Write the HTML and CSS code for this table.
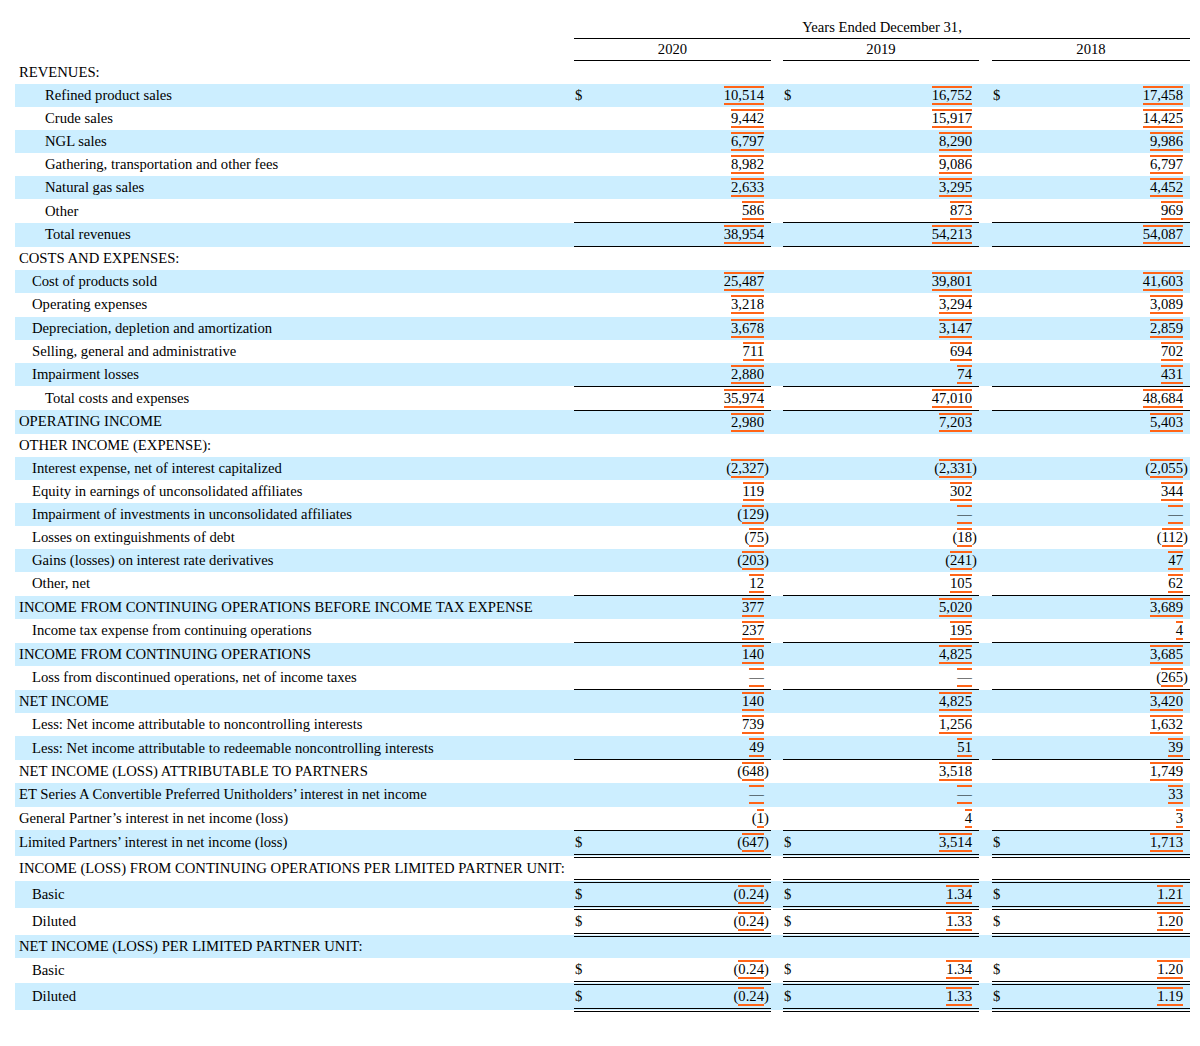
FILE: index.html
```html
<!DOCTYPE html>
<html>
<head>
<meta charset="utf-8">
<link rel="stylesheet" href="styles.css">
</head>
<body>
<div class="page">
<table class="stmt">
<colgroup><col class="c-label"><col class="c-v1"><col class="c-g1"><col class="c-v2"><col class="c-g2"><col class="c-v3"></colgroup>
<tr class="hd"><td></td><td colspan="5" class="hcap">Years Ended December 31,</td></tr>
<tr class="hd hd2"><td></td><td class="hy">2020</td><td></td><td class="hy">2019</td><td></td><td class="hy">2018</td></tr>

<tr><td class="l">REVENUES:</td><td></td><td></td><td></td><td></td><td></td></tr>
<tr class="b"><td class="l i2">Refined product sales</td><td class="v"><div class="cell"><span class="cur">$</span><span class="m">10,514</span></div></td><td></td><td class="v"><div class="cell"><span class="cur">$</span><span class="m">16,752</span></div></td><td></td><td class="v"><div class="cell"><span class="cur">$</span><span class="m">17,458</span></div></td></tr>
<tr><td class="l i2">Crude sales</td><td class="v"><div class="cell"><span class="m">9,442</span></div></td><td></td><td class="v"><div class="cell"><span class="m">15,917</span></div></td><td></td><td class="v"><div class="cell"><span class="m">14,425</span></div></td></tr>
<tr class="b"><td class="l i2">NGL sales</td><td class="v"><div class="cell"><span class="m">6,797</span></div></td><td></td><td class="v"><div class="cell"><span class="m">8,290</span></div></td><td></td><td class="v"><div class="cell"><span class="m">9,986</span></div></td></tr>
<tr><td class="l i2">Gathering, transportation and other fees</td><td class="v"><div class="cell"><span class="m">8,982</span></div></td><td></td><td class="v"><div class="cell"><span class="m">9,086</span></div></td><td></td><td class="v"><div class="cell"><span class="m">6,797</span></div></td></tr>
<tr class="b"><td class="l i2">Natural gas sales</td><td class="v"><div class="cell"><span class="m">2,633</span></div></td><td></td><td class="v"><div class="cell"><span class="m">3,295</span></div></td><td></td><td class="v"><div class="cell"><span class="m">4,452</span></div></td></tr>
<tr><td class="l i2">Other</td><td class="v"><div class="cell"><span class="m">586</span></div></td><td></td><td class="v"><div class="cell"><span class="m">873</span></div></td><td></td><td class="v"><div class="cell"><span class="m">969</span></div></td></tr>
<tr class="b t u"><td class="l i2">Total revenues</td><td class="v"><div class="cell"><span class="m">38,954</span></div></td><td></td><td class="v"><div class="cell"><span class="m">54,213</span></div></td><td></td><td class="v"><div class="cell"><span class="m">54,087</span></div></td></tr>

<tr><td class="l">COSTS AND EXPENSES:</td><td></td><td></td><td></td><td></td><td></td></tr>
<tr class="b"><td class="l i1">Cost of products sold</td><td class="v"><div class="cell"><span class="m">25,487</span></div></td><td></td><td class="v"><div class="cell"><span class="m">39,801</span></div></td><td></td><td class="v"><div class="cell"><span class="m">41,603</span></div></td></tr>
<tr><td class="l i1">Operating expenses</td><td class="v"><div class="cell"><span class="m">3,218</span></div></td><td></td><td class="v"><div class="cell"><span class="m">3,294</span></div></td><td></td><td class="v"><div class="cell"><span class="m">3,089</span></div></td></tr>
<tr class="b"><td class="l i1">Depreciation, depletion and amortization</td><td class="v"><div class="cell"><span class="m">3,678</span></div></td><td></td><td class="v"><div class="cell"><span class="m">3,147</span></div></td><td></td><td class="v"><div class="cell"><span class="m">2,859</span></div></td></tr>
<tr><td class="l i1">Selling, general and administrative</td><td class="v"><div class="cell"><span class="m">711</span></div></td><td></td><td class="v"><div class="cell"><span class="m">694</span></div></td><td></td><td class="v"><div class="cell"><span class="m">702</span></div></td></tr>
<tr class="b"><td class="l i1">Impairment losses</td><td class="v"><div class="cell"><span class="m">2,880</span></div></td><td></td><td class="v"><div class="cell"><span class="m">74</span></div></td><td></td><td class="v"><div class="cell"><span class="m">431</span></div></td></tr>
<tr class="t u"><td class="l i2">Total costs and expenses</td><td class="v"><div class="cell"><span class="m">35,974</span></div></td><td></td><td class="v"><div class="cell"><span class="m">47,010</span></div></td><td></td><td class="v"><div class="cell"><span class="m">48,684</span></div></td></tr>
<tr class="b"><td class="l">OPERATING INCOME</td><td class="v"><div class="cell"><span class="m">2,980</span></div></td><td></td><td class="v"><div class="cell"><span class="m">7,203</span></div></td><td></td><td class="v"><div class="cell"><span class="m">5,403</span></div></td></tr>

<tr><td class="l">OTHER INCOME (EXPENSE):</td><td></td><td></td><td></td><td></td><td></td></tr>
<tr class="b"><td class="l i1">Interest expense, net of interest capitalized</td><td class="v"><div class="cell"><span>(</span><span class="m">2,327</span><span class="rp">)</span></div></td><td></td><td class="v"><div class="cell"><span>(</span><span class="m">2,331</span><span class="rp">)</span></div></td><td></td><td class="v"><div class="cell"><span>(</span><span class="m">2,055</span><span class="rp">)</span></div></td></tr>
<tr><td class="l i1">Equity in earnings of unconsolidated affiliates</td><td class="v"><div class="cell"><span class="m">119</span></div></td><td></td><td class="v"><div class="cell"><span class="m">302</span></div></td><td></td><td class="v"><div class="cell"><span class="m">344</span></div></td></tr>
<tr class="b"><td class="l i1">Impairment of investments in unconsolidated affiliates</td><td class="v"><div class="cell"><span>(</span><span class="m">129</span><span class="rp">)</span></div></td><td></td><td class="v"><div class="cell"><span class="m">—</span></div></td><td></td><td class="v"><div class="cell"><span class="m">—</span></div></td></tr>
<tr><td class="l i1">Losses on extinguishments of debt</td><td class="v"><div class="cell"><span>(</span><span class="m">75</span><span class="rp">)</span></div></td><td></td><td class="v"><div class="cell"><span>(</span><span class="m">18</span><span class="rp">)</span></div></td><td></td><td class="v"><div class="cell"><span>(</span><span class="m">112</span><span class="rp">)</span></div></td></tr>
<tr class="b"><td class="l i1">Gains (losses) on interest rate derivatives</td><td class="v"><div class="cell"><span>(</span><span class="m">203</span><span class="rp">)</span></div></td><td></td><td class="v"><div class="cell"><span>(</span><span class="m">241</span><span class="rp">)</span></div></td><td></td><td class="v"><div class="cell"><span class="m">47</span></div></td></tr>
<tr><td class="l i1">Other, net</td><td class="v"><div class="cell"><span class="m">12</span></div></td><td></td><td class="v"><div class="cell"><span class="m">105</span></div></td><td></td><td class="v"><div class="cell"><span class="m">62</span></div></td></tr>
<tr class="b t"><td class="l">INCOME FROM CONTINUING OPERATIONS BEFORE INCOME TAX EXPENSE</td><td class="v"><div class="cell"><span class="m">377</span></div></td><td></td><td class="v"><div class="cell"><span class="m">5,020</span></div></td><td></td><td class="v"><div class="cell"><span class="m">3,689</span></div></td></tr>
<tr><td class="l i1">Income tax expense from continuing operations</td><td class="v"><div class="cell"><span class="m">237</span></div></td><td></td><td class="v"><div class="cell"><span class="m">195</span></div></td><td></td><td class="v"><div class="cell"><span class="m">4</span></div></td></tr>
<tr class="b t"><td class="l">INCOME FROM CONTINUING OPERATIONS</td><td class="v"><div class="cell"><span class="m">140</span></div></td><td></td><td class="v"><div class="cell"><span class="m">4,825</span></div></td><td></td><td class="v"><div class="cell"><span class="m">3,685</span></div></td></tr>
<tr><td class="l i1">Loss from discontinued operations, net of income taxes</td><td class="v"><div class="cell"><span class="m">—</span></div></td><td></td><td class="v"><div class="cell"><span class="m">—</span></div></td><td></td><td class="v"><div class="cell"><span>(</span><span class="m">265</span><span class="rp">)</span></div></td></tr>
<tr class="b t"><td class="l">NET INCOME</td><td class="v"><div class="cell"><span class="m">140</span></div></td><td></td><td class="v"><div class="cell"><span class="m">4,825</span></div></td><td></td><td class="v"><div class="cell"><span class="m">3,420</span></div></td></tr>
<tr><td class="l i1">Less: Net income attributable to noncontrolling interests</td><td class="v"><div class="cell"><span class="m">739</span></div></td><td></td><td class="v"><div class="cell"><span class="m">1,256</span></div></td><td></td><td class="v"><div class="cell"><span class="m">1,632</span></div></td></tr>
<tr class="b"><td class="l i1">Less: Net income attributable to redeemable noncontrolling interests</td><td class="v"><div class="cell"><span class="m">49</span></div></td><td></td><td class="v"><div class="cell"><span class="m">51</span></div></td><td></td><td class="v"><div class="cell"><span class="m">39</span></div></td></tr>
<tr class="t"><td class="l">NET INCOME (LOSS) ATTRIBUTABLE TO PARTNERS</td><td class="v"><div class="cell"><span>(</span><span class="m">648</span><span class="rp">)</span></div></td><td></td><td class="v"><div class="cell"><span class="m">3,518</span></div></td><td></td><td class="v"><div class="cell"><span class="m">1,749</span></div></td></tr>
<tr class="b"><td class="l">ET Series A Convertible Preferred Unitholders’ interest in net income</td><td class="v"><div class="cell"><span class="m">—</span></div></td><td></td><td class="v"><div class="cell"><span class="m">—</span></div></td><td></td><td class="v"><div class="cell"><span class="m">33</span></div></td></tr>
<tr><td class="l">General Partner’s interest in net income (loss)</td><td class="v"><div class="cell"><span>(</span><span class="m">1</span><span class="rp">)</span></div></td><td></td><td class="v"><div class="cell"><span class="m">4</span></div></td><td></td><td class="v"><div class="cell"><span class="m">3</span></div></td></tr>
<tr class="b t dd"><td class="l">Limited Partners’ interest in net income (loss)</td><td class="v"><div class="cell"><span class="cur">$</span><span>(</span><span class="m">647</span><span class="rp">)</span></div></td><td></td><td class="v"><div class="cell"><span class="cur">$</span><span class="m">3,514</span></div></td><td></td><td class="v"><div class="cell"><span class="cur">$</span><span class="m">1,713</span></div></td></tr>
<tr class="sh"><td class="l">INCOME (LOSS) FROM CONTINUING OPERATIONS PER LIMITED PARTNER UNIT:</td><td></td><td></td><td></td><td></td><td></td></tr>
<tr class="b dt dd"><td class="l i1">Basic</td><td class="v"><div class="cell"><span class="cur">$</span><span>(</span><span class="m">0.24</span><span class="rp">)</span></div></td><td></td><td class="v"><div class="cell"><span class="cur">$</span><span class="m">1.34</span></div></td><td></td><td class="v"><div class="cell"><span class="cur">$</span><span class="m">1.21</span></div></td></tr>
<tr class="dd"><td class="l i1">Diluted</td><td class="v"><div class="cell"><span class="cur">$</span><span>(</span><span class="m">0.24</span><span class="rp">)</span></div></td><td></td><td class="v"><div class="cell"><span class="cur">$</span><span class="m">1.33</span></div></td><td></td><td class="v"><div class="cell"><span class="cur">$</span><span class="m">1.20</span></div></td></tr>
<tr class="b sh"><td class="l">NET INCOME (LOSS) PER LIMITED PARTNER UNIT:</td><td></td><td></td><td></td><td></td><td></td></tr>
<tr class="dd"><td class="l i1">Basic</td><td class="v"><div class="cell"><span class="cur">$</span><span>(</span><span class="m">0.24</span><span class="rp">)</span></div></td><td></td><td class="v"><div class="cell"><span class="cur">$</span><span class="m">1.34</span></div></td><td></td><td class="v"><div class="cell"><span class="cur">$</span><span class="m">1.20</span></div></td></tr>
<tr class="b dd"><td class="l i1">Diluted</td><td class="v"><div class="cell"><span class="cur">$</span><span>(</span><span class="m">0.24</span><span class="rp">)</span></div></td><td></td><td class="v"><div class="cell"><span class="cur">$</span><span class="m">1.33</span></div></td><td></td><td class="v"><div class="cell"><span class="cur">$</span><span class="m">1.19</span></div></td></tr>
</table>
</div>
</body>
</html>
```
FILE: styles.css
```css
html, body {
  margin: 0;
  padding: 0;
  background: #fff;
}
body {
  margin: 8px;
  font-family: "Liberation Serif", "Times New Roman", serif;
  font-size: 14.667px;
  color: #000;
}
.page {
  padding: 8px 0 0 7px;
}
.stmt {
  width: 1175px;
  border-collapse: collapse;
  border-spacing: 0;
  table-layout: fixed;
}
.c-label { width: 559px; }
.c-v1 { width: 197px; }
.c-g1 { width: 12px; }
.c-v2 { width: 196px; }
.c-g2 { width: 13px; }
.c-v3 { width: 198px; }

.stmt td {
  padding: 0;
  height: 23.06px;
  line-height: 17px;
  vertical-align: middle;
  white-space: nowrap;
}
.stmt tr.hd td {
  height: 22px;
}
.stmt tr.hd2 td {
  height: 21px;
}
.hcap, .hy {
  text-align: center;
  border-bottom: 1px solid #000;
}
.stmt tr.b td {
  background: #cceeff;
}
.l { padding-left: 4px !important; }
.l.i1 { padding-left: 17px !important; }
.l.i2 { padding-left: 30px !important; }

.v {
  padding-right: 7px !important;
}
.cell {
  display: flex;
  align-items: baseline;
  justify-content: flex-end;
}
.cur {
  margin-right: auto;
  padding-left: 1px;
}
.m {
  display: inline-block;
  border-top: 2px solid #ff6417;
  border-bottom: 2px solid #ff6417;
  line-height: 15px;
}
.rp {
  width: 7px;
  margin-right: -7px;
  text-align: left;
}
tr.t td.v { border-top: 1px solid #000; }
tr.u td.v { border-bottom: 1px solid #000; }
tr.dt td.v { border-top: 4px double #000; }
tr.dd td.v { border-bottom: 4px double #000; }
.stmt tr.sh td { height: 21px; }
```
